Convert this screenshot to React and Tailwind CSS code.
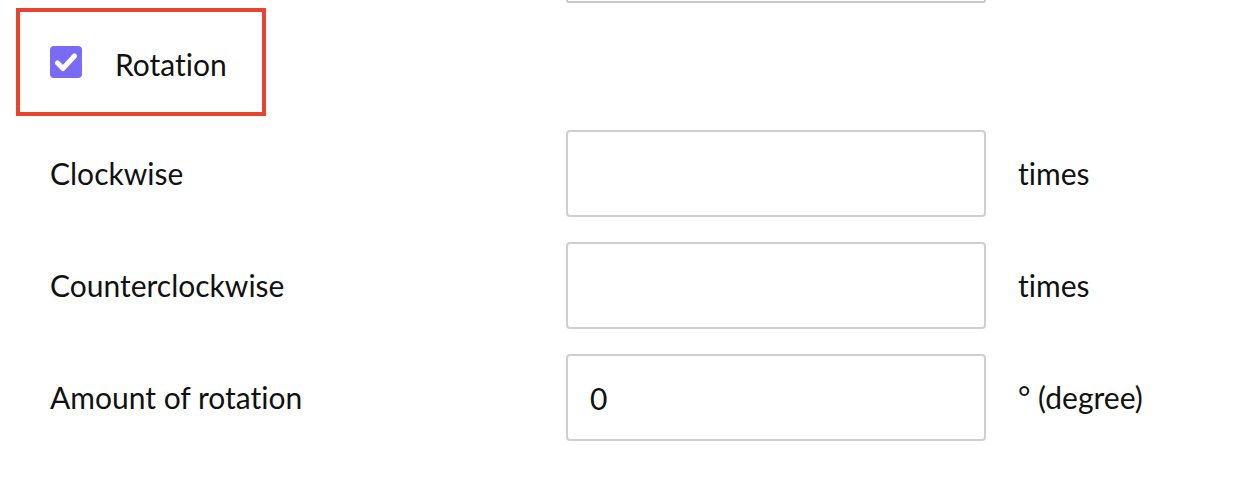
import React, { useState } from "react";

const rows = [
  { label: "Clockwise", value: "", unit: "times" },
  { label: "Counterclockwise", value: "", unit: "times" },
  { label: "Amount of rotation", value: "0", unit: "° (degree)" },
];

function Checkbox({ checked, onChange }) {
  return (
    <button
      onClick={() => onChange(!checked)}
      className="flex items-center justify-center w-[32px] h-[32px] rounded-[4px] bg-[#7a6bf4]"
    >
      {checked && (
        <svg width="24" height="24" viewBox="0 0 24 24" fill="none">
          <path
            d="M3.5 13l5.5 5.5L20.5 6"
            stroke="white"
            strokeWidth="5"
            strokeLinecap="round"
            strokeLinejoin="round"
          />
        </svg>
      )}
    </button>
  );
}

export default function App() {
  const [rotation, setRotation] = useState(true);
  const [values, setValues] = useState(rows.map((r) => r.value));

  return (
    <div
      className="w-[1246px] h-[484px] bg-white text-[#111] overflow-hidden [font-variant-ligatures:none]"
      style={{ fontFamily: "Lato, 'Open Sans', sans-serif" }}
    >
      {/* Tail of the field above */}
      <div className="ml-[566px] w-[420px] h-[3px] border-2 border-t-0 border-[#c8c8c8] rounded-b-[4px]" />

      {/* Rotation toggle (highlighted) */}
      <div className="ml-[16px] mt-[5px] w-[250px] h-[108px] border-4 border-[#e8432c] flex items-center pl-[30px] gap-[33px]">
        <Checkbox checked={rotation} onChange={setRotation} />
        <span className="text-[30px] leading-none mt-[3px]">Rotation</span>
      </div>

      {/* Fields */}
      <div className="mt-[14px] flex flex-col gap-[25px]">
        {rows.map((row, i) => (
          <div key={row.label} className="flex items-center h-[87px]">
            <div className="w-[566px] pl-[50px] text-[30px]">{row.label}</div>
            <input
              type="text"
              value={values[i]}
              onChange={(e) =>
                setValues((prev) =>
                  prev.map((v, j) => (j === i ? e.target.value : v))
                )
              }
              className="w-[420px] h-[87px] border-2 border-[#cfcfcf] rounded-[4px] px-[22px] text-[30px] focus:outline-none"
            />
            <div className="pl-[32px] text-[30px]">{row.unit}</div>
          </div>
        ))}
      </div>
    </div>
  );
}
